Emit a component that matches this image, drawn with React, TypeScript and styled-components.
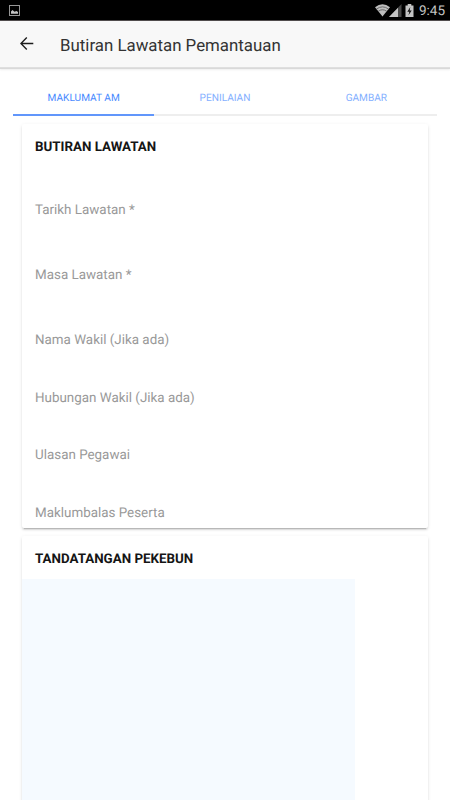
import React from "react";
import styled, { createGlobalStyle } from "styled-components";

const GlobalStyle = createGlobalStyle`
  * { box-sizing: border-box; }
  body {
    margin: 0;
    background: #fff;
    font-family: Roboto, sans-serif;
    text-rendering: geometricPrecision;
    overflow: hidden;
  }
`;

const Screen = styled.div`
  width: 450px;
  height: 800px;
  overflow: hidden;
  background: #fff;
`;

const StatusBar = styled.div`
  height: 21px;
  background: #000;
  border-bottom: 1px solid #504c4d;
  display: flex;
  align-items: center;
  justify-content: space-between;
  padding: 0 5px 0 9px;
`;

const StatusIcons = styled.div`
  display: flex;
  align-items: center;
`;

const Clock = styled.span`
  margin-left: 4px;
  padding-top: 2px;
  width: 26px;
  font-size: 13.5px;
  line-height: 18px;
  color: #c4c4c4;
  white-space: nowrap;
`;

const Toolbar = styled.header`
  height: 46px;
  background: #f8f8f8;
  box-shadow: 0 1px 0 #dfdfdf, 0 2px 0 #d9d9d9, 0 3px 2px #eeeeee;
  display: flex;
  align-items: center;
  padding-left: 20px;
  gap: 26px;
`;

const Title = styled.h1`
  margin: 3px 0 0;
  font-size: 16.85px;
  font-weight: 400;
  line-height: 24px;
  color: #333;
`;

const Tabs = styled.nav`
  display: grid;
  grid-template-columns: repeat(3, 1fr);
  margin: 13px 13px 0;
`;

const Tab = styled.div<{ $active?: boolean }>`
  height: 36px;
  border-bottom: 2px solid ${(p) => (p.$active ? "#6196fb" : "#eeeeee")};
  display: flex;
  justify-content: center;
  font-size: 10.1px;
  line-height: 37px;
  color: ${(p) => (p.$active ? "#488aff" : "#84b0ff")};
`;

const Card = styled.section<{ $height: number }>`
  height: ${(p) => p.$height}px;
  margin: 8px 22px 0;
  border-radius: 2px;
  background: #fff;
  box-shadow: 0 2px 2px 0 rgba(0, 0, 0, 0.11), 0 3px 1px -2px rgba(0, 0, 0, 0.16),
    0 1px 4px 0 rgba(0, 0, 0, 0.07);
  overflow: hidden;
`;

const CardTitle = styled.h2`
  margin: 0;
  height: 43px;
  padding-left: 13px;
  font-size: 13.35px;
  font-weight: 700;
  line-height: 47px;
  color: #151515;
`;

const Field = styled.div<{ $gap: number }>`
  margin-top: ${(p) => p.$gap}px;
  padding-left: 13px;
  height: 20px;
  line-height: 20px;
  font-size: 13.4px;
  color: #999;
`;

const SignaturePad = styled.div`
  width: 333px;
  height: 260px;
  background: #f5faff;
`;

const fields = [
  { label: "Tarikh Lawatan *", gap: 34 },
  { label: "Masa Lawatan *", gap: 45 },
  { label: "Nama Wakil (Jika ada)", gap: 45 },
  { label: "Hubungan Wakil (Jika ada)", gap: 38 },
  { label: "Ulasan Pegawai", gap: 37 },
  { label: "Maklumbalas Peserta", gap: 38 },
];

const PictureIcon = () => (
  <svg width="11" height="11" viewBox="0 0 11 11">
    <rect x=".5" y=".5" width="10" height="10" fill="none" stroke="#969696" />
    <path d="M2 8.7V6.5L3.5 5 5.5 6.8 7.5 6 9 7v1.7z" fill="#c4c4c4" />
  </svg>
);

const SignalIcons = () => (
  <svg width="40" height="15" viewBox="0 0 40 15">
    <path d="M0 4.2Q7.5-1.8 15 4.2L7.5 13.5z" fill="#bdbdbd" />
    <path d="M1.4 6.1Q7.5 1.6 13.6 6.1M3.2 8.3Q7.5 5.2 11.8 8.3" fill="none" stroke="#555" strokeWidth=".8" />
    <path d="M26.5 1v13H14z" fill="#484848" />
    <path d="M23 4.7V14h-9z" fill="#c4c4c4" />
    <path d="M30.5 2.5h2.2V1h3.6v1.5h2.2V14h-8z" fill="#c4c4c4" />
    <path d="M35.3 4l-3 4.7h2l-.8 3.5 3.2-4.8h-2z" fill="#111" />
  </svg>
);

const BackIcon = () => (
  <svg width="14" height="14" viewBox="0 0 14 14" fill="none" stroke="#1c1c1c" strokeWidth="1.4">
    <path d="M13.3 6.5H1.2M6.8 .6L.9 6.5 6.8 12.4" />
  </svg>
);

export default function App() {
  return (
    <Screen>
      <GlobalStyle />
      <StatusBar>
        <PictureIcon />
        <StatusIcons>
          <SignalIcons />
          <Clock>9:45</Clock>
        </StatusIcons>
      </StatusBar>
      <Toolbar>
        <BackIcon />
        <Title>Butiran Lawatan Pemantauan</Title>
      </Toolbar>
      <Tabs>
        <Tab $active>MAKLUMAT AM</Tab>
        <Tab>PENILAIAN</Tab>
        <Tab>GAMBAR</Tab>
      </Tabs>
      <Card $height={404}>
        <CardTitle>BUTIRAN LAWATAN</CardTitle>
        {fields.map((field) => (
          <Field key={field.label} $gap={field.gap}>{field.label}</Field>
        ))}
      </Card>
      <Card $height={300}>
        <CardTitle>TANDATANGAN PEKEBUN</CardTitle>
        <SignaturePad />
      </Card>
    </Screen>
  );
}
